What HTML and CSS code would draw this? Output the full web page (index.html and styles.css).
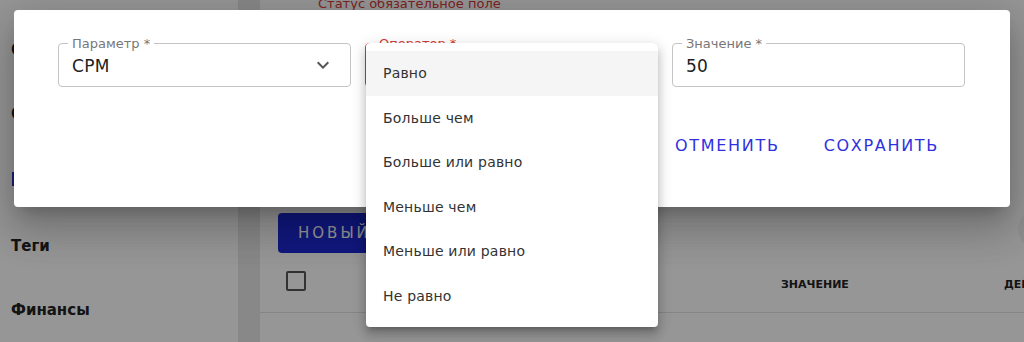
FILE: index.html
```html
<!DOCTYPE html>
<html lang="ru">
<head>
    <meta charset="UTF-8">
    <title>Условия</title>
    <link rel="stylesheet" href="styles.css">
</head>
<body>
    <div class="page">
        <aside class="sidebar">
            <div class="nav-item">Объекты</div>
            <div class="nav-item">Отчёты</div>
            <div class="nav-item"><span class="nav-active"></span></div>
            <div class="nav-item">Теги</div>
            <div class="nav-item">Финансы</div>
        </aside>
        <div class="gutter"></div>
        <main class="content">
            <div class="error-text">Статус обязательное поле</div>
            <div class="toolbar">
                <button class="btn-new">НОВЫЙ</button>
                <span class="round"></span>
            </div>
            <div class="table-head">
                <span class="checkbox"></span>
                <span class="th th-value">ЗНАЧЕНИЕ</span>
                <span class="th th-last">ДЕЙСТВИЯ</span>
            </div>
        </main>
    </div>

    <div class="backdrop">
        <div class="modal">
            <div class="fields">
                <div class="field">
                    <span class="field-label">Параметр *</span>
                    <span class="field-value">CPM</span>
                    <svg class="chevron" width="24" height="24" viewBox="0 0 24 24"><path d="M7.41 8.59 12 13.17l4.59-4.58L18 10l-6 6-6-6 1.41-1.41z" fill="#555"/></svg>
                </div>
                <div class="field field-error">
                    <span class="field-label">Оператор *</span>
                </div>
                <div class="field">
                    <span class="field-label">Значение *</span>
                    <span class="field-value">50</span>
                </div>
            </div>
            <div class="actions">
                <button class="btn-text">ОТМЕНИТЬ</button>
                <button class="btn-text">СОХРАНИТЬ</button>
            </div>
        </div>

        <ul class="menu">
            <li class="menu-item selected">Равно</li>
            <li class="menu-item">Больше чем</li>
            <li class="menu-item">Больше или равно</li>
            <li class="menu-item">Меньше чем</li>
            <li class="menu-item">Меньше или равно</li>
            <li class="menu-item">Не равно</li>
        </ul>
    </div>
</body>
</html>
```

FILE: styles.css
```css
body {
    margin: 0;
    width: 1024px;
    height: 342px;
    overflow: hidden;
    font-family: 'DejaVu Sans', sans-serif;
    background: #fff;
}
.page {
    display: flex;
    height: 342px;
    overflow: hidden;
}
.sidebar {
    width: 238px;
    flex-shrink: 0;
    box-sizing: border-box;
    padding: 40px 0 0 11px;
    background: #fff;
}
.nav-item {
    font-weight: bold;
    font-size: 15px;
    color: #222;
    height: 64px;
    line-height: 20px;
}
.nav-active {
    display: block;
    width: 3px;
    height: 14px;
    background: #2a35c8;
    margin: 4px 0 0 1px;
}
.gutter {
    width: 22px;
    flex-shrink: 0;
    background: #e8e8e8;
}
.content {
    flex: 1;
    overflow: hidden;
}
.error-text {
    font-size: 13px;
    color: #d63a3a;
    margin: -4px 0 0 58px;
    height: 217px;
}
.toolbar {
    display: flex;
    justify-content: space-between;
    margin-left: 18px;
}
.btn-new {
    border: none;
    border-radius: 4px;
    background: #1d2ad6;
    color: #fff;
    height: 40px;
    width: 120px;
    font-family: inherit;
    font-size: 15px;
    letter-spacing: 3px;
    text-align: left;
    padding-left: 20px;
}
.round {
    width: 40px;
    height: 40px;
    border-radius: 50%;
    background: #f4f4f4;
    margin-right: -34px;
    margin-top: -4px;
}
.table-head {
    display: flex;
    align-items: center;
    height: 59px;
    border-bottom: 1px solid #e3e3e3;
}
.checkbox {
    flex-shrink: 0;
    width: 16px;
    height: 16px;
    border: 2px solid #555;
    border-radius: 2px;
    margin-left: 26px;
    margin-top: -4px;
}
.th {
    font-size: 11px;
    font-weight: bold;
    color: #222;
    margin-top: 3px;
    white-space: nowrap;
}
.th-value {
    margin-left: 475px;
}
.th-last {
    margin-left: 155px;
}
.backdrop {
    position: absolute;
    left: 0;
    top: 0;
    width: 1024px;
    height: 342px;
    background: rgba(0, 0, 0, 0.41);
}
.modal {
    position: absolute;
    left: 14px;
    top: 10px;
    width: 996px;
    height: 197px;
    box-sizing: border-box;
    padding: 33px 44px 0;
    background: #fff;
    border-radius: 4px;
    box-shadow: 0 11px 15px -7px rgba(0,0,0,0.2), 0 24px 38px 3px rgba(0,0,0,0.14), 0 9px 46px 8px rgba(0,0,0,0.12);
}
.fields {
    display: flex;
    gap: 14px;
}
.field {
    position: relative;
    width: 293px;
    height: 44px;
    box-sizing: border-box;
    border: 1px solid #c4c4c4;
    border-radius: 4px;
    display: flex;
    align-items: center;
    padding: 0 13px;
}
.field-label {
    position: absolute;
    left: 9px;
    top: -7px;
    padding: 0 4px;
    background: #fff;
    font-size: 13px;
    line-height: 14px;
    color: #777;
}
.field-error {
    border-color: #d63a3a;
}
.field-error .field-label {
    color: #d63a3a;
}
.field-value {
    font-size: 17px;
    letter-spacing: 0.3px;
    color: #222;
    margin-top: 2px;
}
.chevron {
    position: absolute;
    right: 15px;
    top: 9px;
}
.actions {
    display: flex;
    justify-content: flex-end;
    gap: 28px;
    margin-top: 43px;
    padding-right: 19px;
}
.btn-text {
    border: none;
    background: none;
    font-family: inherit;
    font-size: 16px;
    letter-spacing: 1.7px;
    color: #2e31e0;
    padding: 6px 8px;
}
.menu {
    position: absolute;
    left: 366px;
    top: 43px;
    width: 292px;
    margin: 0;
    padding: 8px 0;
    list-style: none;
    background: #fff;
    border-radius: 4px;
    box-shadow: 0 5px 5px -3px rgba(0,0,0,0.2), 0 8px 10px 1px rgba(0,0,0,0.14), 0 3px 14px 2px rgba(0,0,0,0.12);
}
.menu-item {
    height: 44.6px;
    line-height: 45px;
    padding-left: 17px;
    font-size: 14px;
    letter-spacing: 0.2px;
    color: #333;
}
.selected {
    background: #f5f5f5;
}
```
